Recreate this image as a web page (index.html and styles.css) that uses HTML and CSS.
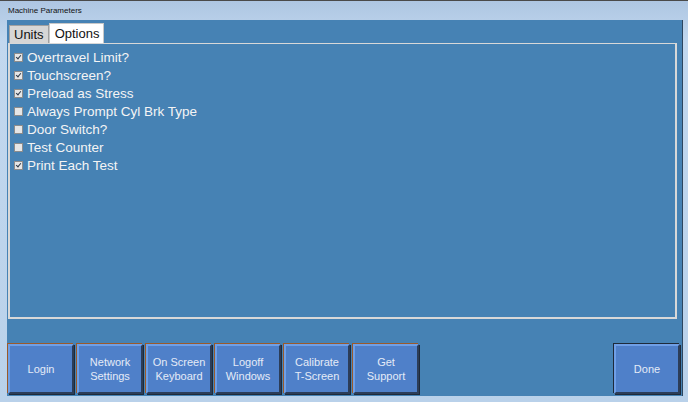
FILE: index.html
```html
<!DOCTYPE html>
<html lang="en">

<head>
  <meta charset="UTF-8">
  <title>Machine Parameters</title>
  <link rel="stylesheet" href="styles.css">
</head>

<body>
  <div class="window">
    <div class="titleBar">Machine Parameters</div>
    <div class="client">
      <div class="tabs">
        <div class="tab">Units</div>
        <div class="tab tabActive">Options</div>
      </div>
      <div class="panel">
        <div class="option"><span class="box checked"></span>Overtravel Limit?</div>
        <div class="option"><span class="box checked"></span>Touchscreen?</div>
        <div class="option"><span class="box checked"></span>Preload as Stress</div>
        <div class="option"><span class="box"></span>Always Prompt Cyl Brk Type</div>
        <div class="option"><span class="box"></span>Door Switch?</div>
        <div class="option"><span class="box"></span>Test Counter</div>
        <div class="option"><span class="box checked"></span>Print Each Test</div>
      </div>
      <div class="buttonRow">
        <div class="btn">Login</div>
        <div class="btn">Network<br>Settings</div>
        <div class="btn">On Screen<br>Keyboard</div>
        <div class="btn">Logoff<br>Windows</div>
        <div class="btn">Calibrate<br>T-Screen</div>
        <div class="btn">Get<br>Support</div>
        <div class="btn btnDone">Done</div>
      </div>
    </div>
  </div>
</body>

</html>
```

FILE: styles.css
```css
body {
  margin: 0;
  background-color: #b9d1ea;
  font-family: "Liberation Sans", Arial, sans-serif;
}

.window {
  width: 688px;
  height: 402px;
  box-sizing: border-box;
  border-top: 1px solid #4a4a4a;
  background: linear-gradient(#aec6e2, #c2d8ef 40px, #b9d1ea);
  display: flex;
  flex-direction: column;
}

.titleBar {
  height: 19px;
  padding-left: 8px;
  font-size: 8px;
  line-height: 20px;
  color: #111;
}

.client {
  margin: 0 5px 0 7px;
  height: 376px;
  box-sizing: border-box;
  background-color: #4682b4;
  border-right: 1px solid #2c4660;
  padding: 3px 2px 2px 0;
  display: flex;
  flex-direction: column;
}

.tabs {
  display: flex;
  align-items: flex-end;
  height: 20px;
  padding-left: 2px;
}

.tab {
  height: 18px;
  padding: 0 4px;
  box-sizing: border-box;
  background-color: #d6d6d6;
  border: 1px solid #a0a0a0;
  border-bottom: none;
  font-size: 13px;
  line-height: 18px;
  color: #111;
}

.tabActive {
  height: 20px;
  padding: 0 4px 0 5px;
  background-color: #fff;
  border-color: #c8c8c8;
  line-height: 20px;
}

.panel {
  height: 276px;
  box-sizing: border-box;
  margin: 0 3px 0 1px;
  border: 2px solid #d8d8d8;
  border-top: 1px solid #d8d8d8;
  padding: 4px 0 0 4px;
}

.option {
  display: flex;
  align-items: center;
  height: 18px;
  font-size: 13.5px;
  color: #f4f4f4;
}

.box {
  width: 9px;
  height: 9px;
  margin-right: 4px;
  box-sizing: border-box;
  border: 1px solid #8c8c8c;
  background-color: #e6e6e6;
  position: relative;
}

.checked::after {
  content: "";
  position: absolute;
  left: 2px;
  top: 0px;
  width: 2px;
  height: 4px;
  border: solid #2f3a4a;
  border-width: 0 1.5px 1.5px 0;
  transform: rotate(40deg);
}

.buttonRow {
  display: flex;
  gap: 3px;
  margin-top: 25px;
  padding-left: 1px;
}

.btn {
  width: 66px;
  height: 50px;
  box-sizing: border-box;
  display: flex;
  align-items: center;
  justify-content: center;
  text-align: center;
  background-color: #4f80c9;
  border: 2px solid;
  border-color: #6f9fe6 #2c3d58 #2c3d58 #6f9fe6;
  box-shadow: -1px -1px 0 #9a5a2a, 1px 1px 0 #1e2a3a;
  font-size: 11px;
  line-height: 14px;
  color: #e4ebf7;
}

.btnDone {
  margin-left: auto;
  box-shadow: -1px -1px 0 #1e2a3a, 1px 1px 0 #1e2a3a;
}
```
